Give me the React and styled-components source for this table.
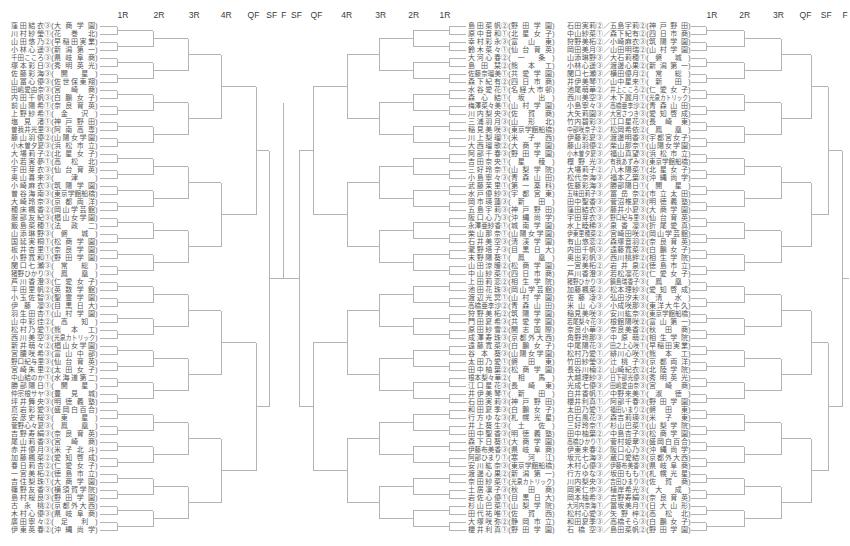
import React from 'react';
import styled, { createGlobalStyle } from 'styled-components';

const FS = 7;
const ROW = 8;

const LEFT = [
  '窪田結衣|③|大商学園', '川村紗瑩|①|花巻北', '山田悠乃|②|早稲田実業', '小林心遥|③|新潟第一',
  '千田こころ|③|県岐阜商', '塚本彩日|③|秀明英光', '佐藤彩海|③|開星', '山冨心優|③|佐世保東翔',
  '田嶋愛由奈|③|宮崎商', '内田千帆|③|白鵬女子', '前山陽希|①|奈良育英', '上野紗希|①|金沢',
  '塩見渚|①|神戸野田', '曽我井光里|③|阿南高専', '藤山羽優|②|山陽女学園', '小木曽夕夏|③|浜松市立',
  '大場莉子|②|北星女子', '小若実夢|①|高松北', '宇田芽衣|③|仙台育英', '奥山喜来|③|津',
  '小崎麻衣|③|筑陽学園', '曽谷海南|③|東京学館船橋', '大崎玲奈|③|京都両洋', '穂床楓香|②|岡山学芸館',
  '服部友紀|③|椙山女学園', '飯島菜穂|①|法政二', '山添琳野|③|磐城', '国延実桐|①|松商学園',
  '板井杏里|①|奈良学園', '小野寛和|①|野田学園', '関口七瀬|③|常総', '猪野ひかり|③|鳳凰',
  '芦川香澄|③|仁愛女子', '平田里帆|②|英数学館', '小玉佐智|③|聖霊学園', '伊藤凜|③|目黒日大',
  '羽生田杏|①|山村学園', '山中彩佳|②|高知', '松村乃愛|①|熊本工', '西川美空|③|光泉カトリック',
  '新井萌々|②|椙山女学園', '宮腰咲希|③|富山中部', '野口紀与里|③|仙台育英', '宮崎朱里|②|太田女子',
  '中山結のか|①|水海道第二', '勝部陽日|①|開星', '仲宗根サヤ|③|豊見城', '坪井舞央|③|明徳義塾',
  '嶌岩彩愛|③|盛岡白百合', '安彦史桜|③|東星', '菅野心々夏|③|鳳凰', '吉野寿絹|③|奈良育英',
  '尾山莉香|③|宮崎商', '赤井優月|③|米子北斗', '加藤楓菜|②|愛知啓成', '春日莉杏|②|仁愛女子',
  '一宮美柘|②|徳島市立', '吉住梨珠|①|大商学園', '篠野友香|③|横須賀学院', '島村桜良|③|野田学園',
  '古永桃|②|京都外大西', '木村心優|③|県岐阜商', '廣田寧々|②|足利', '伊東英春|②|沖縄尚学',
];

const MIDDLE = [
  '島田菜帆|②|野田学園', '原中音和|①|北星女子', '幸村彩永|③|富山東', '鈴木菜々|①|仙台育英',
  '大河心春|②|一条', '島田栞|②|熊本工', '佐藤奈瑠美|①|共愛学園', '森下紀有|②|四日市商',
  '水谷愛花|①|名経大市邨', '森心結|①|坂出', '梅澤菜々美|①|山村学園', '川内梨央|③|佐賀商',
  '三浦羽月|③|山形北', '稲見美咲|③|東京学館船橋', '川上梨瑠|①|米子西', '大西瑠歌|②|大商学園',
  '阿部千春|③|野田学園', '吉田奈央|①|星稜', '三好玲奈|①|山梨学院', '小島寧々|③|青森山田',
  '武藤茉里|①|第一薬科', '水戸優紗|③|宇都宮東', '岡市瑛蓮|③|新田', '五島宇莉|③|神戸野田',
  '阪口心乃|③|沖縄尚学', '永澤亜紗香|①|城南学園', '柴山那奈|①|山陽女学園', '石井美空|③|清渓学園',
  '瀧野塔子|③|目黒日大', '末野陽葵|①|鳳凰', '山田涼暖|②|松商学園', '中山紗菜|①|四日市商',
  '上田莉恋|②|相生学院', '池田花珠|③|岡山学芸館', '渡辺光冥|①|山村学園', '高橋亜李沙|②|青森山田',
  '狩野美柘|②|筑陽学園', '門田夏希|③|共愛学園', '原田紗雪|②|開志国際', '成澤寿珠|③|京都外大西',
  '遠藤寛菜|③|白鵬女子', '谷本葵|③|山陽女学園', '太田乃愛|①|磐田東', '田中柚葉|②|松商学園',
  '根本梨々華|②|相馬', '江口星花|③|長崎東', '井伊美琴|①|新田', '石田実莉|③|神戸野田',
  '和田夏季|③|白鵬女子', '行方ゆな|③|札幌光星', '井上葵生|③|土佐', '田中聖香|③|明徳義塾',
  '森下日葵|①|大商学園', '伊藤布美香|③|県岐阜商', '阿部ひまり|①|寒河江', '安川紘奈|③|東京学館船橋',
  '渡邊心果|②|新潟第一', '奈田紗菜|①|光泉カトリック', '土居凛子|③|秋田商', '岩佐心優|①|目黒日大',
  '杉山巴菜|①|山梨学院', '田代祐唯|①|佐賀西', '大塚咲弥|②|静岡市立', '櫻井利真|①|野田学園',
];

const DOUBLES = [
  '石田実莉|②|五島宇莉|②|神戸野田', '中山紗菜|①|森下紀有|②|四日市商', '狩野美柘|②|小崎麻衣|③|筑陽学園', '岡田美月|③|山田明瑞|②|山村学園',
  '山添琳野|③|大石莉穂|①|磐城', '小林心遥|③|渡邊心果|②|新潟第一', '関口七瀬|③|横田優月|②|常総', '井伊美琴|①|山中星来|①|新田',
  '池尾萌華|②|井上こころ|②|仁愛女子', '西川美空|③|木下麗月|①|光泉カトリック', '小島寧々|③|高橋亜李沙|②|青森山田', '大矢莉園|③|大宮さつき|③|愛知啓成',
  '竹内碧彩|③|江口星花|③|長崎東', '中部咲奈子|②|松岡希依|②|鳳凰', '伊藤彩夏|③|渡邊明香|③|宇都宮女子', '藤山羽優|②|柴山那奈|①|山陽女学園',
  '小木曽夕夏|③|福山真望|③|浜松市立', '樫野光|③|有我あずみ|③|東京学館船橋', '大場莉子|②|八木陽菜|①|北星女子', '松代奈海|③|福本乙葉|③|沖縄尚学',
  '佐藤彩海|③|勝部陽日|①|開星', '五味田莉子|③|冨岳奈|②|市立太田', '田中聖香|③|菅沼椎夏|③|明徳義塾', '窪田結衣|③|藤井小夏|③|大商学園',
  '宇田芽衣|③|野口紀与里|③|仙台育英', '水上睦稀|③|泉香凜|③|折尾愛真', '伊東里穂菜|②|宮崎田咲|②|岡山学芸館', '有山悠恋|②|森塚音羽|②|奈良育英',
  '内田千帆|③|遠藤寛菜|③|白鵬女子', '奥出彩帆|③|西川桃絆|②|相生学院', '一宮美柘|②|岩井泉|②|徳島市立', '芦川香澄|③|若松凜花|③|仁愛女子',
  '猪野ひかり|③|鍋島瑞香子|③|鳳凰', '加藤楓菜|②|松本理紗|③|愛知啓成', '佐藤凌|③|弘田汐未|③|清水', '米山心|③|小成咲那|③|東洋大牛久',
  '稲見美咲|③|安川紘奈|③|東京学館船橋', '若尾梨々花|③|根館陽咲|②|富山第一', '奈良小華|③|奈良美香|②|秋田商', '角野玲那|③|中原萌|②|相生学院',
  '中尾陽花|③|田之上心咲|①|早稲田実業', '松村乃愛|①|緋川心咲|①|熊本工', '竹田紗瑩|③|辻桃子|③|京都両洋', '長谷川楠|②|山崎紀衣|②|北陸学院',
  '大越理紗|③|日下部光優|③|秀明英光', '光成七優|③|田嶋愛由奈|③|宮崎商', '白井香帆|①|中野来美|①|淑徳', '櫻井利真|①|阿部千春|③|野田学園',
  '太田乃愛|①|福田いまり|②|磐田東', '白石風花|③|森吉莉瑛|③|米子東', '三好玲奈|①|杉山巴菜|①|山梨学院', '田中柚葉|②|中島杏子|③|松商学園',
  '高橋ひかり|①|菅村姫翠|③|盛岡白百合', '伊東来春|②|阪口心乃|③|沖縄尚学', '坂元七海|③|蔵口愛結|③|京都外大西', '木村心優|③|伊藤布美香|③|県岐阜商',
  '行方ゆな|③|坂田もも|①|札幌光星', '川内梨央|③|吉田ひまり|③|佐賀商', '岡実仁歩|③|植岸希光|③|大成', '岡本柚希|③|吉野寿絹|③|奈良育英',
  '大河内奈海|①|冨坂美月|①|日大山形', '松村心愛|③|矢野梓|②|高松北', '和田夏季|③|高橋そら|③|白鵬女子', '石橋空|③|島田菜帆|②|野田学園',
];

// round label centres, measured from the left edge of each panel
const LEFT_ROUNDS = [
  ['1R', 123], ['2R', 158], ['3R', 197], ['4R', 225], ['QF', 258], ['SF', 273], ['F', 283],
  ['SF', 296], ['QF', 311], ['4R', 348], ['3R', 380], ['2R', 415], ['1R', 445],
];
const RIGHT_ROUNDS = [['1R', 156], ['2R', 186], ['3R', 227], ['QF', 250], ['SF', 271], ['F', 289]];

const GlobalStyle = createGlobalStyle`
  html, body { margin: 0; padding: 0; background: #fff; }
  body {
    font-family: "Liberation Sans", "Noto Sans CJK JP", sans-serif;
    color: #555;
  }
`;

const Page = styled.div`
  display: flex;
  width: 850px;
  height: 546px;
  overflow: hidden;
  background: #fff;
`;

const Panel = styled.section`
  display: flex;
  flex-direction: column;
  width: ${(p) => p.$w}px;
  flex-shrink: 0;
`;

const HeaderRow = styled.div`
  display: flex;
  height: 22px;
  padding-left: ${(p) => p.$pad}px;
  box-sizing: border-box;
`;

const RoundLabel = styled.div`
  width: ${(p) => p.$w}px;
  flex-shrink: 0;
  padding-top: 10px;
  text-align: center;
  font-family: "Liberation Sans", Arial, sans-serif;
  font-size: 8.5px;
  line-height: 10px;
  color: #3a3a3a;
  white-space: nowrap;
`;

const Body = styled.div`
  display: flex;
  align-items: flex-start;
`;

const NameList = styled.div`
  display: flex;
  flex-direction: column;
  padding-left: ${(p) => p.$pad}px;
  width: ${(p) => (p.$w ? `${p.$w}px` : 'auto')};
  flex-shrink: 0;
`;

const Row = styled.div`
  display: flex;
  align-items: center;
  height: ${ROW}px;
  font-size: ${FS}px;
  line-height: ${ROW}px;
  white-space: nowrap;
`;

const Spread = styled.span`
  display: flex;
  width: ${(p) => p.$w}px;
  justify-content: ${(p) => p.$jc};
  flex-shrink: 0;
`;

const Squeeze = styled.span`
  display: block;
  width: ${(p) => p.$w}px;
  flex-shrink: 0;
  overflow: visible;
`;

const SqueezeText = styled.span`
  display: inline-block;
  transform-origin: 0 50%;
  transform: scaleX(${(p) => p.$k});
`;

const Mark = styled.span`
  width: ${(p) => p.$w}px;
  flex-shrink: 0;
  text-align: center;
`;

const Lines = styled.svg`
  display: block;
  flex-shrink: 0;
`;

function Fit({ text, w }) {
  const chars = Array.from(text);
  const n = chars.length;
  if (n * FS > w) {
    return (
      <Squeeze $w={w}>
        <SqueezeText $k={w / (n * FS)}>{text}</SqueezeText>
      </Squeeze>
    );
  }
  const jc = n === 1 ? 'center' : n === 2 ? 'space-around' : 'space-between';
  return (
    <Spread $w={w} $jc={jc}>
      {chars.map((c, i) => (
        <span key={i}>{c}</span>
      ))}
    </Spread>
  );
}

function School({ name, w }) {
  return (
    <>
      <Mark $w={3}>(</Mark>
      <Fit text={name} w={w} />
      <Mark $w={3}>)</Mark>
    </>
  );
}

function Single({ entry }) {
  const [name, grade, school] = entry.split('|');
  return (
    <Row>
      <Fit text={name} w={33} />
      <Mark $w={7}>{grade}</Mark>
      <School name={school} w={41} />
    </Row>
  );
}

function Pair({ entry }) {
  const [a, ga, b, gb, school] = entry.split('|');
  return (
    <Row>
      <Fit text={a} w={29} />
      <Mark $w={7}>{ga}</Mark>
      <Mark $w={7}>／</Mark>
      <Fit text={b} w={29} />
      <Mark $w={7}>{gb}</Mark>
      <School name={school} w={39} />
    </Row>
  );
}

function Rounds({ rounds }) {
  const cx = rounds.map((r) => r[1]);
  const edges = cx.map((c, i) => {
    const prev = i === 0 ? c - (cx[1] - cx[0]) : cx[i - 1];
    return (prev + c) / 2;
  });
  const last = cx[cx.length - 1];
  edges.push(last + (last - cx[cx.length - 2]) / 2);
  return (
    <HeaderRow $pad={edges[0]}>
      {rounds.map(([label], i) => (
        <RoundLabel key={i} $w={edges[i + 1] - edges[i]}>
          {label}
        </RoundLabel>
      ))}
    </HeaderRow>
  );
}

// xs: [line start, round 1 joint, round 2 joint, ...]
function bracket(xs, rows = 64) {
  let d = '';
  const h = (x1, x2, y) => {
    d += `M${x1} ${y + 0.5}H${x2}`;
  };
  const v = (x, y1, y2) => {
    d += `M${x + 0.5} ${y1 + 0.5}V${y2 + 0.5}`;
  };
  let outs = Array.from({ length: rows }, (_, i) => ROW / 2 + i * ROW);
  outs.forEach((y) => h(xs[0], xs[1], y));
  for (let L = 1; L < xs.length; L++) {
    const next = [];
    for (let i = 0; i < outs.length; i += 2) {
      const a = outs[i];
      const b = outs[i + 1];
      v(xs[L], a, b);
      const m = (a + b) / 2;
      next.push(m);
      if (L + 1 < xs.length) h(xs[L], xs[L + 1], m);
    }
    outs = next;
  }
  return { d, out: outs[0] };
}

function MainBracket() {
  const left = bracket([0, 17, 53, 88, 121, 156, 169]);
  const right = bracket([366, 349, 313, 279, 247, 213, 199]);
  const y = left.out + 0.5;
  const final = `M169 ${y}H199M183.5 81V${y}`;
  return (
    <Lines width="366" height={64 * ROW} viewBox={`0 0 366 ${64 * ROW}`}>
      <path d={left.d + right.d + final} fill="none" stroke="#b3b3b3" strokeWidth="1" shapeRendering="crispEdges" />
    </Lines>
  );
}

function DoublesBracket() {
  const b = bracket([0, 15, 53, 90, 120, 137, 151]);
  const y = b.out + 0.5;
  return (
    <Lines width="158" height={64 * ROW} viewBox={`0 0 158 ${64 * ROW}`}>
      <path d={`${b.d}M151 ${y}H158`} fill="none" stroke="#b3b3b3" strokeWidth="1" shapeRendering="crispEdges" />
    </Lines>
  );
}

export default function App() {
  return (
    <>
      <GlobalStyle />
      <Page lang="ja">
        <Panel $w={556}>
          <Rounds rounds={LEFT_ROUNDS} />
          <Body>
            <NameList $pad={11} $w={89}>
              {LEFT.map((e, i) => (
                <Single key={i} entry={e} />
              ))}
            </NameList>
            <MainBracket />
            <NameList $pad={2}>
              {MIDDLE.map((e, i) => (
                <Single key={i} entry={e} />
              ))}
            </NameList>
          </Body>
        </Panel>
        <Panel $w={294}>
          <Rounds rounds={RIGHT_ROUNDS} />
          <Body>
            <NameList $pad={11}>
              {DOUBLES.map((e, i) => (
                <Pair key={i} entry={e} />
              ))}
            </NameList>
            <DoublesBracket />
          </Body>
        </Panel>
      </Page>
    </>
  );
}
